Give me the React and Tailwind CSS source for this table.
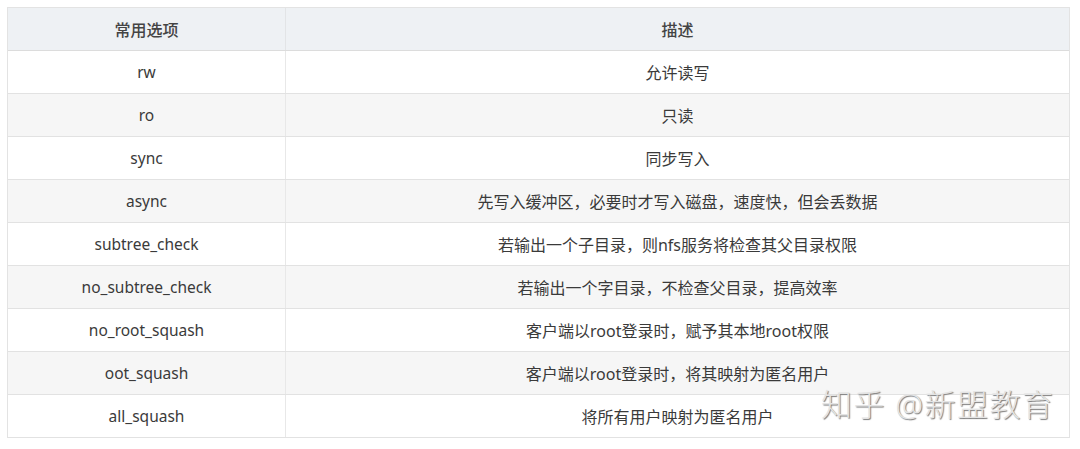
import React from 'react';

const rows = [
    ["rw", "允许读写"],
    ["ro", "只读"],
    ["sync", "同步写入"],
    ["async", "先写入缓冲区，必要时才写入磁盘，速度快，但会丢数据"],
    ["subtree_check", "若输出一个子目录，则nfs服务将检查其父目录权限"],
    ["no_subtree_check", "若输出一个字目录，不检查父目录，提高效率"],
    ["no_root_squash", "客户端以root登录时，赋予其本地root权限"],
    ["oot_squash", "客户端以root登录时，将其映射为匿名用户"],
    ["all_squash", "将所有用户映射为匿名用户"],
];

const App = () => {
    return (
        <div
            className="relative w-[1080px] h-[449px] bg-white pt-[7px] pl-[7px] text-[#3a3a3a]"
            style={{ fontFamily: '"Noto Sans", "Noto Sans CJK SC", sans-serif' }}
        >
            <div className="w-[1063px] border-t border-x border-[#e3e3e3]">
                {/* header */}
                <div className="flex h-[43px] bg-[#eef1f4] border-b border-[#dcdcdc] text-[16px] font-medium text-[#444]">
                    <div className="w-[278px] flex items-center justify-center pt-[2px] border-r border-[#e2e4e6]">常用选项</div>
                    <div className="flex-1 flex items-center justify-center pt-[2px]">描述</div>
                </div>
                {rows.map(([opt, desc], i) => (
                    <div
                        key={opt}
                        className={`flex h-[43px] border-b border-[#e2e2e2] ${i % 2 === 1 ? "bg-[#f6f6f6]" : "bg-white"}`}
                    >
                        <div className="w-[278px] flex items-center justify-center pt-[2px] border-r border-[#e8e8e8] text-[15.5px]">{opt}</div>
                        <div className="flex-1 flex items-center justify-center pt-[2px] text-[16px]">{desc}</div>
                    </div>
                ))}
            </div>

            {/* watermark */}
            <div className="absolute left-[821px] top-[381px] text-[31px] font-light tracking-[1.5px] text-[#e4e4e4] [text-shadow:1px_1px_1px_#7a7a7a] whitespace-nowrap">
                知乎 @新盟教育
            </div>
        </div>
    );
};

export default App;
